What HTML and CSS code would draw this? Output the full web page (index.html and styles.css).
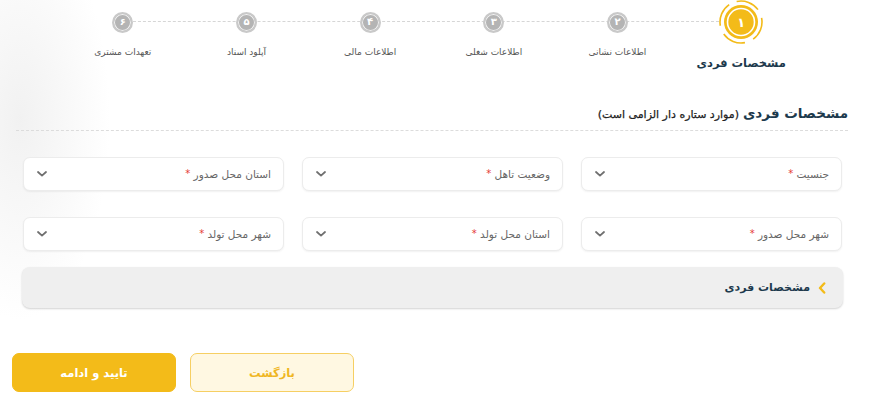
FILE: index.html
```html
<!DOCTYPE html>
<html lang="fa" dir="rtl">
<head>
<meta charset="utf-8">
<title>مشخصات فردی</title>
<link rel="stylesheet" href="styles.css">
</head>
<body>
<div class="page">
  <div class="stepper">
    <div class="step active">
      <div class="step-icon">
        <svg width="48" height="48" viewBox="0 0 48 48">
          <circle cx="24" cy="24" r="21" fill="none" stroke="#f3bb19" stroke-width="1.6" stroke-dasharray="24 9" transform="rotate(-102 24 24)"/>
          <circle cx="24" cy="24" r="17" fill="#f3bb19"/>
          <circle cx="24" cy="24" r="13.5" fill="none" stroke="#fff" stroke-width="1.6"/>
        </svg>
        <span class="num big">۱</span>
      </div>
      <div class="step-label">مشخصات فردی</div>
    </div>
    <div class="step">
      <div class="step-icon"><span class="dot">۲</span></div>
      <div class="step-label">اطلاعات نشانی</div>
    </div>
    <div class="step">
      <div class="step-icon"><span class="dot">۳</span></div>
      <div class="step-label">اطلاعات شغلی</div>
    </div>
    <div class="step">
      <div class="step-icon"><span class="dot">۴</span></div>
      <div class="step-label">اطلاعات مالی</div>
    </div>
    <div class="step">
      <div class="step-icon"><span class="dot">۵</span></div>
      <div class="step-label">آپلود اسناد</div>
    </div>
    <div class="step">
      <div class="step-icon"><span class="dot">۶</span></div>
      <div class="step-label">تعهدات مشتری</div>
    </div>
  </div>

  <div class="section-title">
    <span class="title-main">مشخصات فردی</span>
    <span class="title-sub">(موارد ستاره دار الزامی است)</span>
  </div>
  <div class="divider"></div>

  <div class="fields">
    <div class="field"><span class="label">جنسیت <span class="req">*</span></span><svg class="chev" width="10" height="6" viewBox="0 0 10 6"><path d="M1 1l4 3.6L9 1" fill="none" stroke="#707070" stroke-width="1.8" stroke-linecap="round" stroke-linejoin="round"/></svg></div>
    <div class="field"><span class="label">وضعیت تاهل <span class="req">*</span></span><svg class="chev" width="10" height="6" viewBox="0 0 10 6"><path d="M1 1l4 3.6L9 1" fill="none" stroke="#707070" stroke-width="1.8" stroke-linecap="round" stroke-linejoin="round"/></svg></div>
    <div class="field"><span class="label">استان محل صدور <span class="req">*</span></span><svg class="chev" width="10" height="6" viewBox="0 0 10 6"><path d="M1 1l4 3.6L9 1" fill="none" stroke="#707070" stroke-width="1.8" stroke-linecap="round" stroke-linejoin="round"/></svg></div>
    <div class="field"><span class="label">شهر محل صدور <span class="req">*</span></span><svg class="chev" width="10" height="6" viewBox="0 0 10 6"><path d="M1 1l4 3.6L9 1" fill="none" stroke="#707070" stroke-width="1.8" stroke-linecap="round" stroke-linejoin="round"/></svg></div>
    <div class="field"><span class="label">استان محل تولد <span class="req">*</span></span><svg class="chev" width="10" height="6" viewBox="0 0 10 6"><path d="M1 1l4 3.6L9 1" fill="none" stroke="#707070" stroke-width="1.8" stroke-linecap="round" stroke-linejoin="round"/></svg></div>
    <div class="field"><span class="label">شهر محل تولد <span class="req">*</span></span><svg class="chev" width="10" height="6" viewBox="0 0 10 6"><path d="M1 1l4 3.6L9 1" fill="none" stroke="#707070" stroke-width="1.8" stroke-linecap="round" stroke-linejoin="round"/></svg></div>
  </div>

  <div class="accordion">
    <svg class="acc-chev" width="8" height="12" viewBox="0 0 8 12"><path d="M6.2 1.5L2 6l4.2 4.5" fill="none" stroke="#f3bb19" stroke-width="2.4" stroke-linecap="round" stroke-linejoin="round"/></svg>
    <span class="acc-title">مشخصات فردی</span>
  </div>

  <div class="actions">
    <button class="btn btn-back">بازگشت</button>
    <button class="btn btn-primary">تایید و ادامه</button>
  </div>
</div>
</body>
</html>
```

FILE: styles.css
```css
* { box-sizing: border-box; }
html, body { margin: 0; padding: 0; }
body {
  width: 880px;
  height: 400px;
  overflow: hidden;
  background:
    radial-gradient(ellipse 90px 200px at 20px 120px, rgba(230,230,230,0.55), rgba(255,255,255,0) 100%),
    #fff;
  font-family: "DejaVu Sans", "Noto Sans", sans-serif;
  color: #333;
  direction: rtl;
}
.page { position: relative; width: 880px; height: 400px; }

/* stepper */
.stepper {
  position: relative;
  display: flex;
  width: 742px;
  margin-right: 77px;
  height: 76px;
}
.stepper::before {
  content: "";
  position: absolute;
  top: 21px;
  left: 62px;
  right: 84px;
  border-top: 1.5px dashed #d6d6d6;
}
.step {
  position: relative;
  flex: 1 1 0;
  display: flex;
  flex-direction: column;
  align-items: center;
}
.step-icon {
  position: relative;
  height: 44px;
  width: 48px;
  display: flex;
  align-items: center;
  justify-content: center;
}
.step-icon svg { position: absolute; top: -2px; left: 0; }
.dot {
  width: 21px;
  height: 21px;
  border-radius: 50%;
  background: #b4b4b4;
  border: 2px solid #c9c9c9;
  box-shadow: inset 0 0 0 1px #f2f2f2;
  color: #fff;
  font-size: 10px;
  font-weight: bold;
  display: flex;
  align-items: center;
  justify-content: center;
  line-height: 1;
}
.num.big {
  position: relative;
  color: #fff;
  font-size: 13px;
  font-weight: bold;
  line-height: 1;
}
.step-label {
  margin-top: 3px;
  font-size: 9px;
  color: #555;
  white-space: nowrap;
}
.step.active .step-label {
  margin-top: 12px;
  font-size: 11.5px;
  font-weight: bold;
  color: #1d3a4d;
}

/* section title */
.section-title {
  margin-top: 29px;
  padding-right: 32px;
  display: flex;
  align-items: baseline;
  gap: 4px;
  height: 22px;
  white-space: nowrap;
}
.title-main { font-size: 13.5px; font-weight: bold; color: #1d3a4d; }
.title-sub { font-size: 11px; font-weight: normal; color: #222; -webkit-text-stroke: 0.25px #222; }
.divider {
  margin: 3px 32px 0 16px;
  border-top: 1.5px dashed #dcdcdc;
}

/* fields */
.fields {
  margin: 26px 38px 0 23px;
  display: grid;
  grid-template-columns: repeat(3, 261px);
  column-gap: 18px;
  row-gap: 26px;
}
.field {
  height: 34px;
  border: 1px solid #ececec;
  border-radius: 7px;
  background: #fff;
  box-shadow: 0 1px 2px rgba(0,0,0,0.06);
  display: flex;
  align-items: center;
  justify-content: space-between;
  padding: 0 12px 0 13px;
}
.label { font-size: 10.5px; color: #666; white-space: nowrap; }
.req { color: #e53935; font-size: 10px; position: relative; top: -1px; }
.chev { flex: 0 0 auto; }

/* accordion */
.accordion {
  margin: 16px 37px 0 22px;
  height: 41px;
  background: #efefef;
  border-radius: 8px;
  box-shadow: 0 1px 2px rgba(0,0,0,0.18);
  display: flex;
  align-items: center;
  gap: 8px;
  padding-right: 17px;
}
.acc-title { font-size: 11px; font-weight: bold; color: #1d3a4d; }

/* buttons */
.actions {
  margin-top: 45px;
  padding-left: 12px;
  display: flex;
  justify-content: flex-end;
  gap: 14px;
}
.btn {
  width: 164px;
  height: 39px;
  border-radius: 7px;
  font-family: "DejaVu Sans", sans-serif;
  font-size: 11.5px;
  font-weight: bold;
  cursor: pointer;
}
.btn-primary {
  background: #f3bb19;
  border: 1px solid #f3bb19;
  color: #fff;
}
.btn-back {
  background: #fff8e2;
  border: 1px solid #f6cf63;
  color: #efb623;
}
```
